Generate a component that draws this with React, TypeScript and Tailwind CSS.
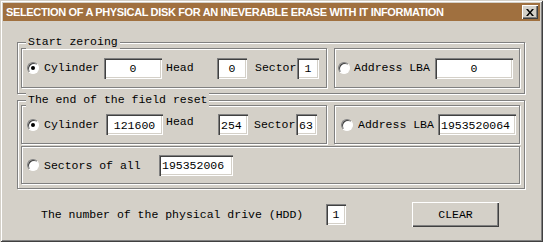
const mono = "font-[family-name:'Liberation_Mono','Courier_New',monospace] text-[11.5px] text-black";

const Radio = ({ checked = false }: { checked?: boolean }) => (
  <span className="flex h-[12px] w-[12px] shrink-0 items-center justify-center rounded-full border border-t-[#808080] border-l-[#808080] border-b-white border-r-white bg-white shadow-[inset_1px_1px_0_#404040]">
    {checked && <span className="h-[4px] w-[4px] rounded-full bg-black" />}
  </span>
);

interface FieldProps {
  value: string;
  w: string;
  align?: string;
}
const Field = ({ value, w, align = "justify-center" }: FieldProps) => (
  <div
    className={`${w} flex h-[21px] shrink-0 items-center ${align} bg-white px-[3px] pt-[1px] shadow-[inset_1px_1px_0_#808080,inset_2px_2px_0_#404040,inset_-1px_-1px_0_#ffffff,inset_-2px_-2px_0_#d4d0c8]`}
  >
    <span className={mono}>{value}</span>
  </div>
);

const Panel = ({ className, children }: { className: string; children: React.ReactNode }) => (
  <div className={`flex items-center border border-[#808080] shadow-[inset_1px_1px_0_#fff,1px_1px_0_#fff] ${className}`}>
    {children}
  </div>
);

const Group = ({ title, className, children }: { title: string; className: string; children: React.ReactNode }) => (
  <div className={`relative ml-[17px] w-[508px] border border-[#808080] shadow-[inset_1px_1px_0_#fff,1px_1px_0_#fff] ${className}`}>
    <span className={`absolute -top-[8px] left-[8px] bg-[#d4d0c8] px-[2px] leading-[14px] ${mono}`}>{title}</span>
    {children}
  </div>
);

export default function App() {
  return (
    <div className="h-[242px] w-[543px] overflow-hidden bg-[#d4d0c8] pt-[3px] shadow-[inset_1px_1px_0_#d4d0c8,inset_-1px_-1px_0_#404040,inset_2px_2px_0_#fff,inset_-2px_-2px_0_#808080]">
      {/* title bar */}
      <div className="mx-[3px] flex h-[18px] items-center justify-between bg-[#a0703f] pl-[3px] pr-[2px]">
        <span className="font-[family-name:'Liberation_Sans',Arial,sans-serif] text-[11px] font-bold tracking-[-0.35px] text-white">
          SELECTION OF A PHYSICAL DISK FOR AN INEVERABLE ERASE WITH IT INFORMATION
        </span>
        <button className="flex h-[14px] w-[16px] items-center justify-center bg-[#d4d0c8] shadow-[inset_1px_1px_0_#fff,inset_-1px_-1px_0_#404040,inset_-2px_-2px_0_#808080]">
          <svg width="8" height="7" viewBox="0 0 8 7">
            <path d="M0 0h2l2 2.5L6 0h2L5 3.5 8 7H6L4 4.5 2 7H0l3-3.5z" fill="#000" />
          </svg>
        </button>
      </div>

      {/* start zeroing */}
      <Group title="Start zeroing" className="mt-[21px] flex h-[52px] gap-[7px] py-[5px] pl-[3px] pr-[4px]">
        <Panel className="w-[306px] pl-[5px]">
          <Radio checked />
          <span className={`ml-[5px] w-[60px] ${mono}`}>Cylinder</span>
          <Field value="0" w="w-[58px]" />
          <span className={`ml-[4px] w-[51px] ${mono}`}>Head</span>
          <Field value="0" w="w-[30px]" />
          <span className={`ml-[8px] w-[42px] ${mono}`}>Sector</span>
          <Field value="1" w="w-[22px]" />
        </Panel>
        <Panel className="w-[186px] pl-[3px]">
          <Radio />
          <span className={`ml-[4px] w-[81px] ${mono}`}>Address LBA</span>
          <Field value="0" w="w-[78px]" />
        </Panel>
      </Group>

      {/* end of the field reset */}
      <Group title="The end of the field reset" className="mt-[6px] flex h-[89px] flex-col gap-[2px] pb-[4px] pl-[3px] pr-[4px] pt-[4px]">
        <div className="flex h-[40px] gap-[7px]">
          <Panel className="w-[306px] pl-[5px]">
            <Radio checked />
            <span className={`ml-[5px] w-[62px] ${mono}`}>Cylinder</span>
            <Field value="121600" w="w-[57px]" />
            <span className={`ml-[3px] w-[52px] -translate-y-[3px] ${mono}`}>Head</span>
            <Field value="254" w="w-[30px]" align="justify-start" />
            <span className={`ml-[6px] w-[42px] ${mono}`}>Sector</span>
            <Field value="63" w="w-[21px]" align="justify-start" />
          </Panel>
          <Panel className="w-[186px] pl-[6px]">
            <Radio />
            <span className={`ml-[5px] w-[80px] overflow-hidden whitespace-nowrap ${mono}`}>Address LBA</span>
            <Field value="1953520064" w="w-[78px]" align="justify-start" />
          </Panel>
        </div>
        <Panel className="h-[38px] w-[499px] pl-[5px]">
          <Radio />
          <span className={`ml-[5px] w-[115px] ${mono}`}>Sectors of all</span>
          <Field value="195352006" w="w-[74px]" align="justify-start" />
        </Panel>
      </Group>

      {/* bottom row */}
      <div className="mt-[13px] flex items-center pl-[41px]">
        <span className={`w-[285px] ${mono}`}>The number of the physical drive (HDD)</span>
        <Field value="1" w="w-[20px]" />
        <button
          className={`ml-[66px] h-[25px] w-[87px] bg-[#d4d0c8] shadow-[inset_1px_1px_0_#fff,inset_-1px_-1px_0_#404040,inset_-2px_-2px_0_#808080] ${mono}`}
        >
          CLEAR
        </button>
      </div>
    </div>
  );
}
